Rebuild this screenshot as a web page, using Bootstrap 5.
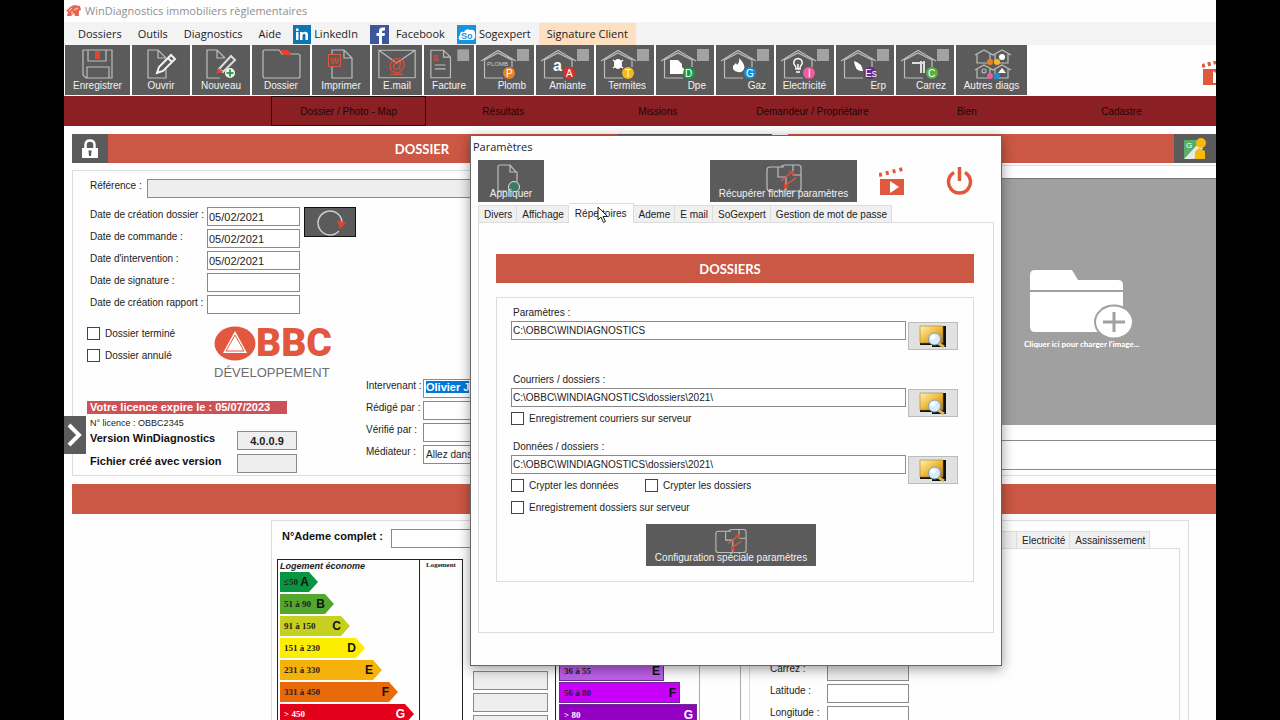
<!DOCTYPE html>
<html lang="fr">
<head>
<meta charset="utf-8">
<meta name="viewport" content="width=device-width, initial-scale=1">
<title>WinDiagnostics immobiliers règlementaires</title>
<link href="https://cdn.jsdelivr.net/npm/bootstrap@5.3.0/dist/css/bootstrap.min.css" rel="stylesheet">
<style>
:root{--brick:#cb5844;--wine:#8b2024;--slate:#5b5b5b;--line:#dcdcdc}
body{background:#000;font:10px/12px "Liberation Sans",Arial,sans-serif;color:#222;padding:0 5%;height:100vh;overflow:hidden}
.app{background:#fefefe;height:100%}
svg{display:block}
.ui-text{font-family:"Open Sans","Segoe UI",sans-serif;font-size:11px}
.titlebar{height:22px;color:#8f8f8f;padding-left:2px}
.menubar{height:23px;background:#f3f3f4;padding:1px 0 0 6px}
.menubar a{color:#1c1c1c;text-decoration:none;height:22px;display:flex;align-items:center;gap:3px;padding:0 8px}
.menubar a.brand-link{padding:0;margin:0 8px 0 4px}
.menubar a.sig{background:#fddfc2;margin-left:0}
.toolbar{padding:0 0 1px 1px;gap:2px}
.dark-btn{background:var(--slate);border:0;color:#f2f2f2;padding:4px 0 0;display:flex;flex-direction:column;align-items:center}
.toolbar .dark-btn{width:58px;height:50px;line-height:12px}
.toolbar .dark-btn svg{width:58px;height:31px}
.toolbar .diag{align-items:flex-end}
.toolbar .diag span{padding-right:8px}
.toolbar .w-first{width:65px}.toolbar .w-mid{width:50px}.toolbar .w-last{width:71px}
.toolbar .w-mid svg{width:50px}
.line-art{fill:none;stroke:#bdbdbd;stroke-width:1.2}
.tabs-main{background:var(--wine);height:30px;padding:0 1.5% 0 18%}
.tabs-main a{flex:1 1 0;color:#1d0506;text-decoration:none;text-align:center;line-height:29px;border:1px solid transparent}
.tabs-main a.active{border-color:#2a0a0c}
.workspace{padding:8px 0 0 8px}
.bar{background:var(--brick);height:29px;display:flex}
.bar.second{margin-top:8px;height:30px}
.bar h2,.bar-title{font:bold 13px/30px Lato,Carlito,sans-serif;color:#fff;margin:0;text-align:center;flex-grow:1}
.bar-title{padding-right:10px}
.bar-left h2{padding-left:118px}
.bar .dark-btn{width:36px;padding:0;justify-content:center}
.bar .wide{width:154px}
.bar .map{width:42px}
.col-dossier{width:700px;flex:none}
.frame{border:1px solid var(--line)}
.dossier-body{height:306px;margin-top:7px;padding:8px 10px 0 14px;position:relative}
.photo-body{height:311px;margin-top:2px;border-right:0;padding-top:12px}
.field{border:1px solid #8a8a8a;background:#fff;height:19px;padding:0 2px;font-size:11px;line-height:16px;color:#222;border-radius:0;min-width:0}
.field.off{background:#eee}
.ref-label{width:60px;padding-left:3px;line-height:14px}
.date-block{margin-top:9px}
.dates{display:grid;grid-template-columns:120px 93px;row-gap:3px;line-height:15px}
.dates .field{padding-left:1px}
.dates label{padding-left:3px}
.refresh{width:52px;height:30px;border:1px solid #111;padding:2px 0 0;margin-left:4px}
.tick{appearance:none;width:13px;height:13px;border:1px solid #444;background:#fff;margin:0;flex:none}
.tick-row{display:flex;align-items:center;gap:5px;height:13px}
.states{width:127px;padding-top:13px;display:flex;flex-direction:column;gap:9px}
.left-info{width:279px;flex:none}
.logo-block{padding-top:12px;color:#e2583e}
.logo-block strong{font:900 39px/35px Roboto,sans-serif}
.logo-block small{display:block;font:13px/15px "Liberation Sans",sans-serif;color:#6d6d6d;margin-top:4px}
.licence{background:#cd5257;color:#fff;font-weight:bold;font-size:11px;width:200px;line-height:13px;padding-left:3px;margin-top:21px}
.licence-no{font-size:9px;padding:3px 0 2px 3px}
.version-row{font-weight:bold;font-size:11px;line-height:14px;color:#111;display:flex;margin-bottom:4px}
.version-row label{width:150px;padding-left:3px}
.version-row .field{width:60px}
.people{display:grid;grid-template-columns:57px 1fr;grid-auto-rows:19px;row-gap:3px;flex-grow:1;padding-top:65px;line-height:14px}
.people .field{font-size:10px}
.selected{background:#0078d7;color:#fff;font-weight:bold;font-size:11px;line-height:14px}
.drawer{position:absolute;left:-9px;top:245px;width:22px;height:38px;justify-content:center;padding:0}
.photo{background:#a0a0a0;border:0;border-top:1px solid #777;height:247px;width:100%;display:flex;flex-direction:column;align-items:flex-start;padding:89px 0 0 235px;color:#fff;font:900 8px/12px Lato,sans-serif}
.caption-field{width:100%;height:30px;margin-top:15px;border-left:0;border-right:0}
.bottom{margin:6px 27px 0 199px;padding:0 8px 0 5px;height:240px}
.ademe{height:38px;padding:8px 0 0 5px;font-size:11px;line-height:14px;font-weight:bold;color:#111}
.ademe label{width:109px}
.ademe .field{width:150px}
.chart{width:186px;height:200px;border:1px solid #222;border-bottom:0;flex:none}
.chart.ges-chart{border-right-color:#aaa}
.chart .scale{width:142px;border-right:1px solid #222;padding:0 0 0 2px;height:100%}
.scale em{display:block;font-weight:bold;font-size:9px;line-height:12px}
.step{height:20px;margin-bottom:2px;display:flex;justify-content:space-between;align-items:center;font:bold 9px/12px "Liberation Serif",serif;color:#222;padding:0 9px 0 4px;clip-path:polygon(0 0,calc(100% - 9px) 0,100% 50%,calc(100% - 9px) 100%,0 100%)}
.step b{font:bold 12px/12px "Liberation Sans",sans-serif;color:#111}
.chart .ges{padding:100px 0 0 3px;width:144px;border-right-color:#aaa}
.ges .step{clip-path:none;border:1px solid #6b2c8f;height:21px;margin-bottom:1px;padding:0 3px 0 4px}
.logement{font:bold 7px/10px "Liberation Serif",serif;text-align:center;flex-grow:1}
.mid-fields,.geo{display:flex;flex-direction:column;gap:3px}
.mid-fields{padding:112px 7px 0 10px}
.mid-fields .field{width:75px}
.geo{width:203px;margin-left:8px;border-left:1px solid var(--line);padding:141px 0 0 20px;flex:none;line-height:14px}
.geo div{display:flex}.geo label{width:57px}.geo .field{width:82px}
.right-tabs{padding:10px 0 0 20px}
.first-tab{width:45px}
.tab-body{height:200px}
.right-tabs .tab-body{border-left:0}
.tabstrip{display:flex}
.tabstrip button{border:1px solid var(--line);border-bottom:0;border-left-width:0;background:#f0f0f0;padding:0 4px 0 5px;height:17px;line-height:17px;color:#222}
.tabstrip button:first-child{border-left-width:1px}
.dialog-win{position:absolute;left:406px;top:135px;width:532px;height:531px;background:#fefefe;border:1px solid #666;box-shadow:0 3px 12px rgba(0,0,0,.4);padding:3px 7px 0;display:flex;flex-direction:column}
.dialog-win h1{font-size:11px;line-height:15px;margin:0 0 6px -5px;font-weight:400}
.dialog-win .top{height:42px}
.dialog-win .top .dark-btn,.config{height:42px;padding-top:4px}
.top span{margin-top:-4px}
.config span{margin-top:-2px}
.apply{width:66px}
.recover{width:147px;margin-left:166px}
.icon-btn{border:0;background:none;padding:0}
.clap{margin-left:22px}.power{margin-left:41px}
.dialog-win .tabstrip{align-items:flex-end;margin-top:2px;height:18px;flex:none;position:relative;z-index:1}
.dialog-win .tabstrip button.on{background:#fefefe;height:20px;margin-bottom:-1px;line-height:17px;padding:0 6px}
.pane{height:411px;padding:31px 19px 0 17px}
.group{height:285px;margin-top:14px;padding:9px 15px 0 14px}
.path-row{display:flex;gap:2px;height:29px;align-items:flex-start}
.path-row .field{flex-grow:1;font-size:10px;padding-left:1px}
.path-label{display:block;line-height:12px;padding-left:2px;margin-bottom:2px}
.browse{width:50px;height:28px;margin-top:1px;border:1px solid #bcbcbc;background:#e1e1e1;padding:0;display:flex;justify-content:center;align-items:center}
.path-block{height:67px}
.path-block.last{height:60px}
.under{margin-top:-5px}
.crypt{width:134px}
.config{width:170px;margin:10px 0 0 135px}
.cursor{position:absolute;left:126px;top:70px;z-index:2}
</style>
</head>
<body>
<svg width="0" height="0" class="position-absolute" aria-hidden="true">
<defs>
<linearGradient id="gold" x1="0" y1="0" x2="1" y2="1"><stop offset="0" stop-color="#fff3b0"/><stop offset=".5" stop-color="#efbb3f"/><stop offset="1" stop-color="#b87407"/></linearGradient>
<symbol id="house" viewBox="0 0 58 31"><path class="line-art" d="M5 12 22 1.500 40 12M8.500 29V11L22 4 36 11V18M8.500 29H27"/><path fill="#a2a2a2" d="M41 0h12v12H41z"/></symbol>
<symbol id="search-folder" viewBox="0 0 28 23"><path fill="#111" d="M24 1h3v21H13v-2H1v-2h23z"/><path fill="url(#gold)" stroke="#9b7a2c" stroke-width=".6" d="M1 1h23v17H1z"/><path stroke="#d9b45f" stroke-width="3" d="m19 18 6 4"/><circle cx="15.500" cy="14" r="6" fill="#d9ecf8" stroke="#7f9fb5"/><circle cx="14" cy="12" r="2.500" fill="#fff"/></symbol>
<symbol id="clapper" viewBox="0 0 26 28"><path fill="#e2583e" d="M1 12h24v16H1z"/><path fill="#fff" d="m11 14 9 6-9 6z"/><path fill="none" stroke="#e2583e" stroke-width="4" stroke-dasharray="3 4" d="M0 8 24 2"/></symbol>
<symbol id="transfer" viewBox="0 0 36 28"><g class="line-art"><path d="M12 3H4q-3 0-3 3v18q0 3 3 3h16V14M12 3v10h9M15 3q1-2 4-2h13q3 0 3 3v20q0 3-3 3H21M27 1v10h8M12 3h6"/></g><path fill="none" stroke="#e2583e" stroke-width="1.500" d="m15 17 12-10M18 22l12-8"/><path fill="#e2442f" d="M22 7h6v5zM18 19v6l5-2z"/></symbol>
</defs>
</svg>

<div class="app position-relative overflow-hidden">
  <header class="titlebar ui-text d-flex align-items-center gap-1">
    <svg width="15" height="12" viewBox="0 0 15 12"><path fill="#e26852" d="m0 6 4-4 4-2 6 1 1 4-2 1v5H9l-1-3-3 3H1l1-4z"/><path stroke="#fff" stroke-width=".8" d="m3 6 3-3M8 5l4-2M6 9V6"/></svg>
    <span>WinDiagnostics immobiliers règlementaires</span>
  </header>

  <nav class="menubar ui-text d-flex">
    <a href="#">Dossiers</a><a href="#">Outils</a><a href="#">Diagnostics</a><a href="#">Aide</a>
    <a href="#" class="brand-link"><svg width="18" height="19"><path fill="#0a76b4" d="M0 0h18v19H0z"/><path fill="#fff" d="M3 7h2.500v8H3zM3 3.500h2.500V6H3zM7 7h2.500v1q1-1.300 2.500-1.300 3 0 3 3.300v5h-2.500v-4.500q0-1.700-1.300-1.700T9.500 10.500V15H7z"/></svg>LinkedIn</a>
    <a href="#" class="brand-link"><svg width="19" height="19"><path fill="#3a589b" d="M0 0h19v19H0z"/><path fill="#fff" d="M9 19v-8H6.500V8H9V6q0-3.500 3.500-3.500H15v3h-1.500Q12 5.500 12 7v1h3l-.5 3H12v8z"/></svg><span class="ps-1">Facebook</span></a>
    <a href="#" class="brand-link"><svg width="19" height="19"><path fill="#1595e0" d="M0 0h19v19H0z"/><path fill="#fff" d="M3 15q-3-2 0-5 0-4 4-3 2-4 6-2 5-1 5 4 1 4-2 6z"/><text x="4" y="14" font-size="9" font-weight="bold" fill="#1595e0" font-family="Liberation Sans">So</text></svg>Sogexpert</a>
    <a href="#" class="sig">Signature Client</a>
  </nav>

  <div class="d-flex justify-content-between">
  <div class="toolbar d-flex">
    <button class="dark-btn w-first"><svg viewBox="0 0 58 31"><path class="line-art" d="M14 1h29v28H17l-3-3zM19 1v11h18V1M18 29V18h22v11"/><path fill="#e2442f" d="M26 2h5v8h-5z"/></svg><span>Enregistrer</span></button>
    <button class="dark-btn"><svg viewBox="0 0 58 31"><path class="line-art" d="M34 9 26 1H16v28h18V20M26 1v8h8"/><path fill="none" stroke="#f4f4f4" stroke-width="2" d="m25 24 2-6L39 6l4 4-12 12zM36 9l4 4"/></svg><span>Ouvrir</span></button>
    <button class="dark-btn"><svg viewBox="0 0 58 31"><path class="line-art" d="M33 9 25 1H15v28h13M25 1v8h8"/><path fill="none" stroke="#ddd" stroke-width="2" d="m27 20 12-13 4 4-12 12z"/><path fill="#e2442f" d="m24 25 3-6 4 4z"/><circle cx="38" cy="24" r="5" fill="#f4f4f4"/><path stroke="#30a145" stroke-width="2" d="M34.500 24h7M38 20.500v7"/></svg><span>Nouveau</span></button>
    <button class="dark-btn"><svg viewBox="0 0 58 31"><path class="line-art" d="M11 3q0-2 2-2h14l3 4h16q2 0 2 2v20q0 2-2 2H13q-2 0-2-2z"/><path fill="#e2442f" d="M28 1h8l3 5h-8z"/></svg><span>Dossier</span></button>
    <button class="dark-btn"><svg viewBox="0 0 58 31"><path class="line-art" d="M20 5V1h12l8 8v20H20V18M32 1v8h8"/><path fill="#5b5b5b" stroke="#e2583e" d="M16.500 5.500h12v12h-12z"/><text x="18" y="15" font-size="9" font-weight="bold" fill="#e2442f">W</text></svg><span>Imprimer</span></button>
    <button class="dark-btn w-mid"><svg viewBox="0 0 51 31"><path class="line-art" d="M7 1h37v28H7zL25 14 44 1"/><text x="16" y="22" font-size="18" fill="#e2442f">@</text><path stroke="#e2583e" d="M19 25.500h13"/></svg><span>E.mail</span></button>
    <button class="dark-btn w-mid"><svg viewBox="0 0 51 31"><path class="line-art" d="M27 8 20 1H7v28h20zM20 1v7h7M11 16h11M11 20h11"/><text x="9" y="12" font-size="10" font-weight="bold" fill="#e2442f">$</text><path fill="#a2a2a2" d="M34 0h12v12H34z"/></svg><span>Facture</span></button>
    <button class="dark-btn diag"><svg><use href="#house"/><text x="11" y="17" font-size="6" fill="#ccc">PLOMB</text><circle cx="33" cy="24" r="6" fill="#e8851f"/><text x="30" y="28" font-size="10" fill="#fff">P</text></svg><span>Plomb</span></button>
    <button class="dark-btn diag"><svg><use href="#house"/><text x="17" y="22" font-size="16" font-weight="bold" fill="#fff">a</text><circle cx="33" cy="24" r="6" fill="#dd2e26"/><text x="30" y="28" font-size="10" fill="#fff">A</text></svg><span>Amiante</span></button>
    <button class="dark-btn diag"><svg><use href="#house"/><ellipse cx="22" cy="15" rx="4" ry="5" fill="#fff"/><path stroke="#fff" stroke-width="1.500" d="m17 11 10 8M17 19l10-8"/><circle cx="32" cy="24" r="6" fill="#f4b921"/><text x="29" y="28" font-size="10" fill="#fff">T</text></svg><span>Termites</span></button>
    <button class="dark-btn diag"><svg><use href="#house"/><path fill="#fff" d="M14 11h8l4 4v3l4 4v3H14z"/><circle cx="33" cy="24" r="6" fill="#189a45"/><text x="29" y="28" font-size="10" fill="#fff">D</text></svg><span>Dpe</span></button>
    <button class="dark-btn diag"><svg><use href="#house"/><path fill="#fff" d="M23 9q7 7 5 11t-6 3q-6-1-5-6l3-3 1 2q3-3 2-7z"/><circle cx="34" cy="24" r="6" fill="#148fd6"/><text x="30" y="28" font-size="10" fill="#fff">G</text></svg><span>Gaz</span></button>
    <button class="dark-btn diag"><svg><use href="#house"/><path fill="none" stroke="#fff" stroke-width="1.500" d="M20 20q0-3-2-5-1-5 4-5.500 5 .5 4 5.500-2 2-2 5zM20 23h4M22 20v-5"/><circle cx="33" cy="24" r="6" fill="#ec5f98"/><text x="32" y="28" font-size="10" fill="#fff">I</text></svg><span>Electricité</span></button>
    <button class="dark-btn diag"><svg><use href="#house"/><path fill="#fff" d="M18 12q8 2 9 10-8 1-9-10z"/><circle cx="34" cy="24" r="6" fill="#65288a"/><text x="29" y="28" font-size="10" fill="#fff">Es</text></svg><span>Erp</span></button>
    <button class="dark-btn diag"><svg><use href="#house"/><path fill="none" stroke="#ddd" stroke-width="2" d="M16 14h12M25 12v12M28 12v12"/><circle cx="36" cy="24" r="6" fill="#58ad45"/><text x="32" y="28" font-size="10" fill="#fff">C</text></svg><span>Carrez</span></button>
    <button class="dark-btn w-last"><svg viewBox="0 0 58 31"><path class="line-art" d="m12 6 9-5 9 5 9-5 9 5M14 5v9h13V5M32 5v9h13V5M12 21l9-5 9 5 9-5 9 5M14 20v9h13v-9M32 20v9h13v-9"/><circle cx="27" cy="13" r="3" fill="#e8851f"/><circle cx="34" cy="13" r="3" fill="#f4b921"/><circle cx="27" cy="27" r="3" fill="#ec5f98"/><circle cx="34" cy="27" r="3" fill="#148fd6"/><circle cx="39" cy="8" r="3" fill="#fff"/><circle cx="21" cy="22" r="2" class="line-art"/><path fill="#fff" d="m39 19 4 5h-8z"/></svg><span>Autres diags</span></button>
  </div>
  <svg class="mt-3" width="14" height="26" viewBox="0 0 14 26"><path fill="#e2583e" d="M1 8h13v16H1z"/><path fill="#fff" d="m11 10 3 2v10h-3z"/><path fill="none" stroke="#e2583e" stroke-width="4" stroke-dasharray="3 3" d="M0 5 14 1"/></svg>
  </div>

  <nav class="tabs-main d-flex">
    <a href="#" class="active">Dossier / Photo - Map</a><a href="#">Résultats</a><a href="#">Missions</a><a href="#">Demandeur / Propriétaire</a><a href="#">Bien</a><a href="#">Cadastre</a>
  </nav>

  <main class="workspace">
    <div class="d-flex gap-3">
      <section class="col-dossier">
        <div class="bar bar-left">
          <button class="dark-btn" aria-label="Verrouiller"><svg width="18" height="20"><path fill="none" stroke="#fff" stroke-width="2.500" d="M4.500 9V6q0-4.500 4.500-4.500T13.500 6v3"/><path fill="#fff" d="M1 9h16v10H1z"/><path fill="#555" d="M7.500 11.500h3L10 17H8z"/></svg></button>
          <h2>DOSSIER</h2>
          <button class="dark-btn wide" aria-label="Dossier"></button>
        </div>
        <div class="frame dossier-body">
          <div class="d-flex"><label for="ref" class="ref-label">Référence :</label><input id="ref" class="field off flex-grow-1"></div>
          <div class="d-flex date-block">
            <div class="dates">
              <label for="d1">Date de création dossier :</label><input id="d1" class="field" value="05/02/2021">
              <label for="d2">Date de commande :</label><input id="d2" class="field" value="05/02/2021">
              <label for="d3">Date d'intervention :</label><input id="d3" class="field" value="05/02/2021">
              <label for="d4">Date de signature :</label><input id="d4" class="field">
              <label for="d5">Date de création rapport :</label><input id="d5" class="field">
            </div>
            <button class="dark-btn refresh" aria-label="Actualiser"><svg width="34" height="26"><path fill="none" stroke="#ccc" stroke-width="1.500" d="M26 21a12 12 0 1 1 3-9"/><path fill="#e2442f" d="m24 10 9 3-6 6z"/></svg></button>
          </div>
          <div class="d-flex">
            <div class="left-info">
              <div class="d-flex">
                <div class="states">
                  <div class="tick-row"><input type="checkbox" class="tick" id="t1"><label for="t1">Dossier terminé</label></div>
                  <div class="tick-row"><input type="checkbox" class="tick" id="t2"><label for="t2">Dossier annulé</label></div>
                </div>
                <div class="logo-block">
                  <div class="d-flex align-items-center"><svg width="42" height="35" viewBox="0 0 42 35"><ellipse cx="21" cy="17.500" rx="20.500" ry="17" fill="#e2583e"/><path fill="#fff" d="M21 5 33 27H9z"/><path fill="none" stroke="#e2583e" d="m21 9 9 16H12z"/></svg><strong>BBC</strong></div>
                  <small>DÉVELOPPEMENT</small>
                </div>
              </div>
              <div class="licence">Votre licence expire le : 05/07/2023</div>
              <div class="licence-no">N° licence : OBBC2345</div>
              <div class="version-row"><label for="v1">Version WinDiagnostics</label><input id="v1" class="field off text-center fw-bold" value="4.0.0.9"></div>
              <div class="version-row"><label for="v2">Fichier créé avec version</label><input id="v2" class="field off"></div>
            </div>
            <div class="people">
              <label for="p1">Intervenant :</label><div class="field" id="p1"><span class="selected">Olivier J</span></div>
              <label for="p2">Rédigé par :</label><input id="p2" class="field">
              <label for="p3">Vérifié par :</label><input id="p3" class="field">
              <label for="p4">Médiateur :</label><input id="p4" class="field" value="Allez dans">
            </div>
          </div>
          <button class="dark-btn drawer" aria-label="Ouvrir le volet"><svg width="16" height="24"><path fill="none" stroke="#fff" stroke-width="4" d="m2 2 10 10L2 22"/></svg></button>
        </div>
      </section>
      <section class="flex-grow-1">
        <div class="bar justify-content-end"><button class="dark-btn map" aria-label="Carte"><svg width="24" height="24"><path fill="#58ad68" d="M1 3h18v19H1z"/><path fill="#e9e9e9" d="M1 22 16 6l4 5-9 11z"/><path fill="#f8b80c" d="M12 22v-7l4-4 6 3v8z"/><circle cx="18" cy="6" r="5" fill="#f8b80c"/><text x="3" y="11" font-size="8" fill="#fff">G</text></svg></button></div>
        <div class="frame photo-body">
          <button class="photo">
            <svg width="112" height="70" viewBox="0 0 112 70"><path fill="#fff" d="M6 22V7q0-5 5-5h37l6 10h40q5 0 5 5v5zM6 24h93v36q0 4-4 4H11q-5 0-5-5z"/><ellipse cx="90" cy="54" rx="20" ry="17.500" fill="#a0a0a0"/><ellipse cx="90" cy="54" rx="18" ry="15.500" fill="#fff"/><path stroke="#a0a0a0" stroke-width="3" d="M79 54h22M90 44v20"/></svg>
            <span>Cliquer ici pour charger l'image...</span>
          </button>
          <input class="field caption-field" aria-label="Légende">
        </div>
      </section>
    </div>

    <div class="bar second"></div>

    <section class="frame bottom">
      <div class="d-flex">
        <div>
          <div class="ademe d-flex"><label for="ad">N°Ademe complet :</label><input id="ad" class="field"></div>
          <div class="d-flex">
            <div class="chart d-flex">
              <div class="scale"><em>Logement économe</em>
                <div class="step" style="width:38px;background:#089440">≤50 <b>A</b></div>
                <div class="step" style="width:54px;background:#52a72c">51 à 90 <b>B</b></div>
                <div class="step" style="width:70px;background:#c5d021">91 à 150 <b>C</b></div>
                <div class="step" style="width:85px;background:#fdee00">151 à 230 <b>D</b></div>
                <div class="step" style="width:102px;background:#f5b20a">231 à 330 <b>E</b></div>
                <div class="step" style="width:118px;background:#e86a0a">331 à 450 <b>F</b></div>
                <div class="step text-white" style="width:134px;background:#e2001a">&gt; 450 <b class="text-white">G</b></div>
              </div>
              <div class="logement">Logement</div>
            </div>
            <div class="mid-fields">
              <input class="field off" aria-label="Valeur 1"><input class="field off" aria-label="Valeur 2"><input class="field off" aria-label="Valeur 3">
            </div>
            <div class="chart ges-chart d-flex">
              <div class="scale ges">
                <div class="step" style="width:105px;background:#bd60e8">36 à 55 <b>E</b></div>
                <div class="step" style="width:121px;background:#c800fa">56 à 80 <b>F</b></div>
                <div class="step text-white" style="width:138px;background:#9300c4">&gt; 80 <b class="text-white">G</b></div>
              </div>
            </div>
          </div>
        </div>
        <div class="geo">
          <div><label for="g1">Carrez :</label><input id="g1" class="field off"></div>
          <div><label for="g2">Latitude :</label><input id="g2" class="field"></div>
          <div><label for="g3">Longitude :</label><input id="g3" class="field"></div>
        </div>
        <div class="flex-grow-1 right-tabs">
          <div class="tabstrip"><button class="first-tab" aria-label="Gaz"></button><button>Electricité</button><button>Assainissement</button></div>
          <div class="frame tab-body"></div>
        </div>
      </div>
    </section>
  </main>

  <section class="dialog-win" role="dialog" aria-labelledby="dlg">
    <h1 id="dlg" class="ui-text">Paramètres</h1>
    <div class="top d-flex">
      <button class="dark-btn apply"><svg width="28" height="28"><path class="line-art" d="M19 8 13 1H3q-2 0-2 2v24h9M13 1v7h7v10"/><circle cx="17" cy="23" r="5.500" fill="#3f7a68" stroke="#ddd"/></svg><span>Appliquer</span></button>
      <button class="dark-btn recover"><svg width="36" height="28"><use href="#transfer"/></svg><span>Récupérer fichier paramètres</span></button>
      <button class="icon-btn clap" aria-label="Vidéo"><svg width="26" height="28"><use href="#clapper"/></svg></button>
      <button class="icon-btn power" aria-label="Quitter"><svg width="27" height="28" viewBox="0 0 27 28"><path fill="none" stroke="#e2583e" stroke-width="3.500" d="M8 5.500a11 11 0 1 0 11 0M13.500 0v14"/></svg></button>
    </div>
    <div class="tabstrip">
      <button>Divers</button><button>Affichage</button><button class="on">Répertoires</button><button>Ademe</button><button>E mail</button><button>SoGexpert</button><button>Gestion de mot de passe</button>
    </div>
    <div class="frame pane">
      <div class="bar"><span class="bar-title">DOSSIERS</span></div>
      <div class="frame group">
        <div class="path-block"><label class="path-label" for="f1">Paramètres :</label>
          <div class="path-row"><input id="f1" class="field" value="C:\OBBC\WINDIAGNOSTICS"><button class="browse" aria-label="Parcourir"><svg width="28" height="23"><use href="#search-folder"/></svg></button></div></div>
        <div class="path-block"><label class="path-label" for="f2">Courriers / dossiers :</label>
          <div class="path-row"><input id="f2" class="field" value="C:\OBBC\WINDIAGNOSTICS\dossiers\2021\"><button class="browse" aria-label="Parcourir"><svg width="28" height="23"><use href="#search-folder"/></svg></button></div>
          <div class="tick-row under"><input type="checkbox" class="tick" id="c1"><label for="c1">Enregistrement courriers sur serveur</label></div></div>
        <div class="path-block last"><label class="path-label" for="f3">Données / dossiers :</label>
          <div class="path-row"><input id="f3" class="field" value="C:\OBBC\WINDIAGNOSTICS\dossiers\2021\"><button class="browse" aria-label="Parcourir"><svg width="28" height="23"><use href="#search-folder"/></svg></button></div>
          <div class="d-flex under"><div class="tick-row crypt"><input type="checkbox" class="tick" id="c2"><label for="c2">Crypter les données</label></div>
          <div class="tick-row"><input type="checkbox" class="tick" id="c3"><label for="c3">Crypter les dossiers</label></div></div></div>
        <div class="tick-row"><input type="checkbox" class="tick" id="c4"><label for="c4">Enregistrement dossiers sur serveur</label></div>
        <button class="dark-btn config"><svg width="32" height="26"><use href="#transfer"/></svg><span>Configuration spéciale paramètres</span></button>
      </div>
    </div>
    <svg class="cursor" width="12" height="18" viewBox="0 0 12 18"><path fill="#fff" stroke="#222" d="M1 1v13l3-3 2.500 5.500 2-1L6 10.500h4.500z"/></svg>
  </section>
</div>
<script src="https://cdn.jsdelivr.net/npm/bootstrap@5.3.0/dist/js/bootstrap.bundle.min.js"></script>
</body>
</html>
